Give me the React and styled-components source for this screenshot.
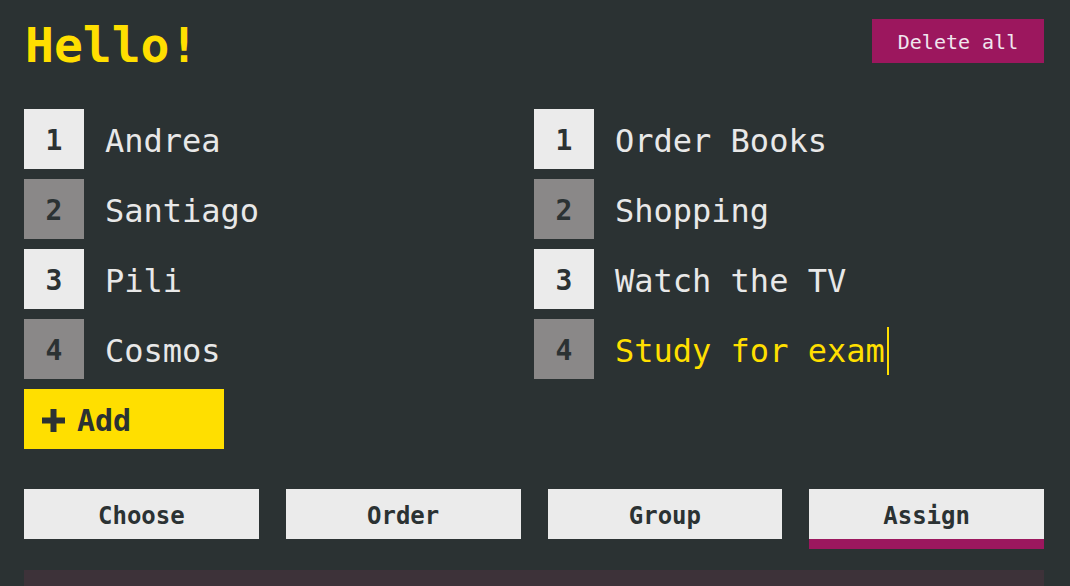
import React from 'react';
import styled, { createGlobalStyle } from 'styled-components';

const GlobalStyle = createGlobalStyle`
  html, body {
    margin: 0;
    padding: 0;
    background: #2b3233;
    font-family: "DejaVu Sans Mono", "Liberation Mono", monospace;
  }
`

const Page = styled.div`
  width: 1070px;
  height: 586px;
  overflow: hidden;
  box-sizing: border-box;
  padding: 19px 26px 0 24px;
  background: #2b3233;
`

const Header = styled.div`
  display: flex;
  justify-content: space-between;
  align-items: flex-start;
  height: 90px;
`

const Title = styled.h1`
  margin: 2px 0 0 1px;
  font-size: 48px;
  line-height: 48px;
  font-weight: bold;
  color: #ffdf00;
`

const DeleteButton = styled.button`
  width: 172px;
  height: 44px;
  padding: 2px 0 0;
  border: none;
  background: #9c175e;
  color: #f0e6ee;
  font-family: inherit;
  font-size: 20px;
  cursor: pointer;
`

const Lists = styled.div`
  display: grid;
  grid-template-columns: 510px 1fr;
`

const Column = styled.div`
  display: flex;
  flex-direction: column;
  gap: 10px;
`

const Row = styled.div`
  display: flex;
  align-items: center;
  height: 60px;
`

const Num = styled.div`
  width: 60px;
  height: 60px;
  display: flex;
  align-items: center;
  justify-content: center;
  padding-top: 2px;
  box-sizing: border-box;
  background: ${p => (p.$odd ? '#ebebeb' : '#8a8888')};
  color: #2b3233;
  font-size: 28px;
  font-weight: bold;
`

const Name = styled.span`
  margin: 3px 0 0 21px;
  font-size: 32px;
  color: ${p => (p.$editing ? '#ffdf00' : '#e8e8e8')};
  border-right: ${p => (p.$editing ? '2px solid #ffdf00' : 'none')};
  line-height: 48px;
  padding-right: 2px;
`

const AddButton = styled.button`
  width: 200px;
  height: 60px;
  display: flex;
  align-items: center;
  gap: 12px;
  padding: 2px 0 0 18px;
  border: none;
  background: #ffdf00;
  color: #2b3233;
  font-family: inherit;
  font-size: 30px;
  font-weight: bold;
  cursor: pointer;
`

const Tabs = styled.div`
  display: grid;
  grid-template-columns: repeat(4, 1fr);
  column-gap: 27px;
  margin-top: 40px;
`

const Tab = styled.button`
  height: 50px;
  padding: 4px 0 0;
  border: none;
  background: #ebebeb;
  color: #2b3233;
  font-family: inherit;
  font-size: 24px;
  font-weight: bold;
  box-shadow: ${p => (p.$active ? '0 10px 0 #9c175e' : 'none')};
  cursor: pointer;
`

const Panel = styled.div`
  margin-top: 31px;
  height: 40px;
  background: #3d3239;
`

const Plus = () => (
  <svg width="23" height="23" viewBox="0 0 23 23">
    <path d="M8.5 0h6v8.5H23v6h-8.5V23h-6v-8.5H0v-6h8.5z" fill="#2b3233" />
  </svg>
)

const people = ['Andrea', 'Santiago', 'Pili', 'Cosmos']
const tasks = ['Order Books', 'Shopping', 'Watch the TV', 'Study for exam']

function App() {
  return (
    <Page>
      <GlobalStyle />
      <Header>
        <Title>Hello!</Title>
        <DeleteButton>Delete all</DeleteButton>
      </Header>
      <Lists>
        <Column>
          {people.map((p, i) => (
            <Row key={p}>
              <Num $odd={i % 2 === 0}>{i + 1}</Num>
              <Name>{p}</Name>
            </Row>
          ))}
          <AddButton><Plus />Add</AddButton>
        </Column>
        <Column>
          {tasks.map((t, i) => (
            <Row key={t}>
              <Num $odd={i % 2 === 0}>{i + 1}</Num>
              <Name $editing={i === 3}>{t}</Name>
            </Row>
          ))}
        </Column>
      </Lists>
      <Tabs>
        <Tab>Choose</Tab>
        <Tab>Order</Tab>
        <Tab>Group</Tab>
        <Tab $active>Assign</Tab>
      </Tabs>
      <Panel />
    </Page>
  )
}

export default App;
